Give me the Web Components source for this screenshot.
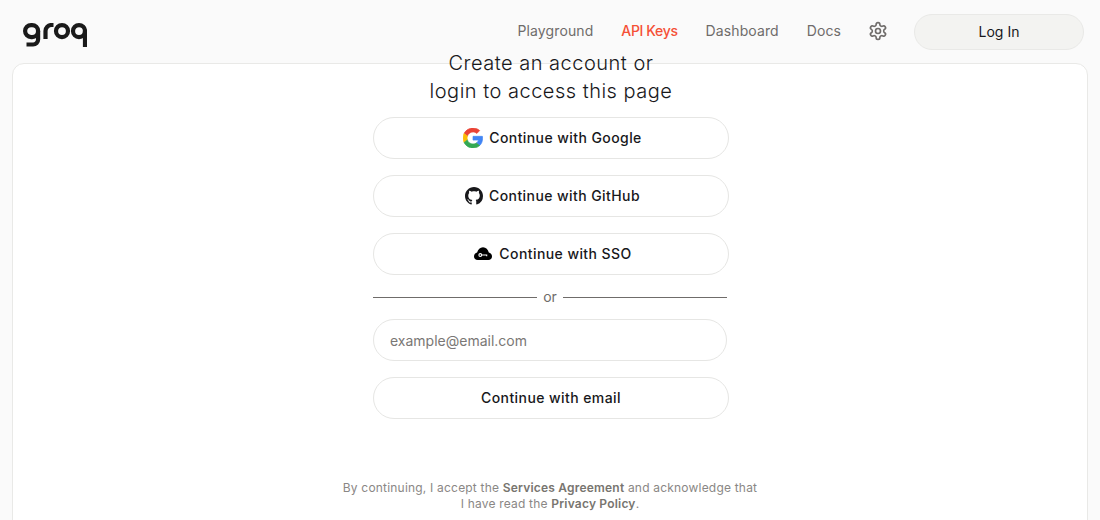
<!DOCTYPE html>
<html><head><meta charset="utf-8"><style>
html,body{margin:0;height:520px;overflow:hidden;background:#fafafa}
</style></head><body>
<template id="t-app"><style>
:host{display:flex;flex-direction:column;height:520px;overflow:hidden;font-family:Inter,"Liberation Sans",sans-serif}
.card{flex:none;height:520px;margin:0 12px;background:#fff;border:1px solid #e9e9e7;border-radius:12px;box-sizing:border-box;display:flex;flex-direction:column;align-items:center}
.col{width:356px;display:flex;flex-direction:column;margin:-15px 0 0 2px}
.gap{display:flex;flex-direction:column;gap:16px}
.foot{margin-top:61px;width:440px;text-align:center}
</style>
<site-header></site-header>
<div class="card"><div class="col"><login-title>Create an account or<br>login to access this page</login-title>
<div class="gap" style="margin-top:12px">
<auth-button><svg slot="icon" width="20" height="20" viewBox="0 0 48 48" stroke-width="1.600"><path fill="#EA4335" stroke="#EA4335" d="M24 9.500c3.540 0 6.710 1.220 9.210 3.600l6.850-6.850C35.900 2.380 30.470 0 24 0 14.620 0 6.510 5.380 2.560 13.220l7.980 6.190C12.430 13.720 17.740 9.500 24 9.500z"/><path fill="#4285F4" stroke="#4285F4" d="M46.980 24.550c0-1.570-.15-3.090-.38-4.550H24v9.020h12.940c-.58 2.960-2.260 5.480-4.780 7.180l7.730 6c4.510-4.180 7.090-10.360 7.090-17.650z"/><path fill="#FBBC05" stroke="#FBBC05" d="M10.530 28.590c-.48-1.450-.76-2.990-.76-4.590s.27-3.140.76-4.590l-7.980-6.190C.92 16.460 0 20.120 0 24c0 3.880.92 7.540 2.560 10.780l7.970-6.190z"/><path fill="#34A853" stroke="#34A853" d="M24 48c6.480 0 11.930-2.130 15.890-5.810l-7.730-6c-2.150 1.450-4.920 2.300-8.160 2.300-6.260 0-11.570-4.220-13.470-9.910l-7.980 6.190C6.510 42.620 14.620 48 24 48z"/></svg>Continue with Google</auth-button>
<auth-button><svg slot="icon" width="18" height="18" viewBox="0 0 16 16" fill="#18181b"><path d="M8 0C3.580 0 0 3.580 0 8c0 3.540 2.290 6.530 5.470 7.590.4.07.55-.17.55-.38 0-.19-.01-.82-.01-1.490-2.010.37-2.530-.49-2.690-.94-.09-.23-.48-.94-.82-1.130-.28-.15-.68-.52-.01-.53.63-.01 1.080.58 1.230.82.72 1.210 1.870.87 2.330.66.07-.52.28-.87.51-1.070-1.780-.2-3.640-.89-3.640-3.950 0-.87.31-1.590.82-2.150-.08-.2-.36-1.020.08-2.120 0 0 .67-.21 2.200.82.64-.18 1.320-.27 2-.27s1.360.09 2 .27c1.530-1.040 2.200-.82 2.200-.82.44 1.100.16 1.920.08 2.120.51.56.82 1.270.82 2.150 0 3.070-1.870 3.750-3.650 3.950.29.25.54.73.54 1.480 0 1.070-.01 1.930-.01 2.200 0 .21.15.46.55.38A8.010 8.010 0 0 0 16 8c0-4.420-3.580-8-8-8z"/></svg>Continue with GitHub</auth-button>
<auth-button><svg slot="icon" width="20" height="20" viewBox="0 0 20 20"><path fill="#000" d="M4.800 16C2.500 16 1 14.400 1 12.400 1 10.500 2.300 9 4.100 8.600 4.900 5.400 7.100 3.200 10 3.200c3 0 5.100 2.200 5.800 5.400 1.900.3 3.200 1.900 3.200 3.800 0 2-1.500 3.600-3.600 3.600z"/><circle cx="7.300" cy="11" r="1.400" fill="none" stroke="#fff" stroke-width="1.100"/><path d="M8.700 11h5v1.300" fill="none" stroke="#fff" stroke-width="1.100"/></svg>Continue with SSO</auth-button>
</div>
<or-divider></or-divider>
<email-input></email-input>
<auth-button style="margin-top:16px">Continue with email</auth-button>
</div>
<div class="foot"><legal-note></legal-note></div>
</div></template>

<template id="t-header"><style>
:host{display:flex;align-items:center;height:63px;flex:none;padding:0 16px 0 23px;box-sizing:border-box;font-family:Inter,sans-serif}
.logo{display:block;margin-top:7px}
nav{margin-left:auto;display:flex;align-items:center;gap:28px;font-size:14px;color:#6f6c6a;letter-spacing:.1px;margin-top:-2px}
nav a{color:inherit;text-decoration:none}
nav a.on{color:#f55036;font-weight:500;letter-spacing:-.35px}
.gear{display:block;margin-left:-1px}
.login{width:170px;height:36px;box-sizing:border-box;margin-left:26px;margin-top:1px;border:1px solid #e9e9e7;border-radius:18px;background:#f3f3f1;display:flex;align-items:center;justify-content:center;padding-bottom:1px;font-size:14px;color:#18181b}
</style>
<svg class="logo" width="64" height="24" viewBox="0 0 64 24" fill="none" stroke="#1a1a1a" stroke-width="4.200"><rect x="2.100" y="2.100" width="13" height="12" rx="6"/><path d="M15.100 8v8.500a5 5 0 0 1-5 5H3.500"/><path d="M22.500 16V8a6 6 0 0 1 6-6H30.500"/><rect x="33" y="2.100" width="12" height="12" rx="6"/><rect x="50" y="2.100" width="12" height="12" rx="6"/><path d="M62 8V24"/></svg>
<nav><a href="#">Playground</a><a href="#" class="on">API Keys</a><a href="#">Dashboard</a><a href="#">Docs</a>
<svg class="gear" width="20" height="20" viewBox="0 0 24 24" fill="none" stroke="#6f6c6a" stroke-width="2" stroke-linecap="round" stroke-linejoin="round"><path d="M12.220 2h-.44a2 2 0 0 0-2 2v.18a2 2 0 0 1-1 1.730l-.43.25a2 2 0 0 1-2 0l-.15-.08a2 2 0 0 0-2.730.730l-.22.38a2 2 0 0 0 .73 2.730l.15.1a2 2 0 0 1 1 1.720v.51a2 2 0 0 1-1 1.740l-.15.09a2 2 0 0 0-.73 2.730l.22.38a2 2 0 0 0 2.730.73l.15-.08a2 2 0 0 1 2 0l.43.25a2 2 0 0 1 1 1.730V20a2 2 0 0 0 2 2h.44a2 2 0 0 0 2-2v-.18a2 2 0 0 1 1-1.730l.43-.25a2 2 0 0 1 2 0l.15.08a2 2 0 0 0 2.730-.73l.22-.39a2 2 0 0 0-.73-2.730l-.15-.08a2 2 0 0 1-1-1.740v-.5a2 2 0 0 1 1-1.740l.15-.09a2 2 0 0 0 .73-2.730l-.22-.38a2 2 0 0 0-2.730-.73l-.15.08a2 2 0 0 1-2 0l-.43-.25a2 2 0 0 1-1-1.730V4a2 2 0 0 0-2-2z"/><circle cx="12" cy="12" r="3"/></svg></nav>
<div class="login">Log In</div>
</template>

<template id="t-title"><style>
:host{display:block;text-align:center}
div{font-size:20px;line-height:28px;font-weight:300;letter-spacing:.5px;color:#18181b}
</style><div><slot></slot></div></template>

<template id="t-button"><style>
:host{display:flex;align-items:center;justify-content:center;gap:6px;height:42px;box-sizing:border-box;border:1px solid #e6e6e4;border-radius:21px;background:#fff;font-size:14px;font-weight:500;letter-spacing:.42px;color:#18181b;font-family:Inter,sans-serif}
span{display:block;margin-top:-2px}
::slotted(svg){display:block;margin-left:3px}
</style><slot name="icon"></slot><span><slot></slot></span></template>

<template id="t-or"><style>
:host{display:flex;align-items:center;gap:6px;height:44px;width:354px;font-size:14px;color:#6f6c6a;font-family:Inter,sans-serif}
i{flex:1;height:1px;background:#6f6c6a}
span{margin-top:-2px}
</style><i></i><span>or</span><i></i></template>

<template id="t-input"><style>
:host{display:flex;align-items:center;height:42px;width:354px;box-sizing:border-box;border:1px solid #e6e6e4;border-radius:21px;padding:0 16px;font-size:14px;color:#7a7775;font-family:Inter,sans-serif}
</style>example@email.com</template>

<template id="t-legal"><style>
:host{display:block;font-size:12px;line-height:16px;letter-spacing:.2px;color:#8a8785;text-align:center}
b{font-weight:600;color:#78756f}
</style>By continuing, I accept the <b>Services Agreement</b> and acknowledge that<br>I have read the <b>Privacy Policy</b>.</template>

<script>
const reg=(n,t)=>customElements.define(n,class extends HTMLElement{constructor(){super();this.attachShadow({mode:'open'}).appendChild(document.getElementById(t).content.cloneNode(true))}});
reg('site-header','t-header');reg('login-title','t-title');reg('auth-button','t-button');reg('or-divider','t-or');reg('email-input','t-input');reg('legal-note','t-legal');reg('app-shell','t-app');
</script>
<app-shell></app-shell>
</body></html>
